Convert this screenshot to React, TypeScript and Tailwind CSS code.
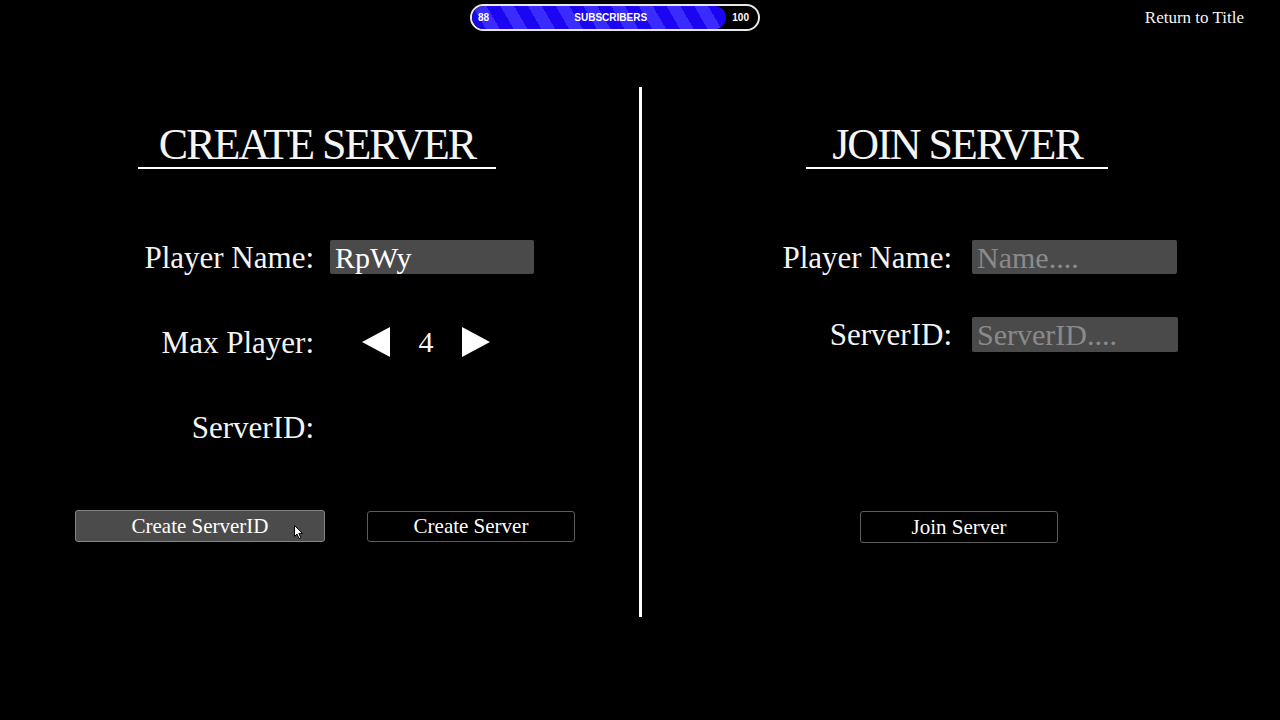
import React from 'react';

const serif = "font-['Liberation_Serif',serif]";

function Triangle({ dir }: { dir: 'left' | 'right' }) {
  return (
    <svg width="28" height="30" viewBox="0 0 28 30" className="block">
      {dir === 'left' ? (
        <polygon points="28,0 28,30 0,15" fill="#ffffff" />
      ) : (
        <polygon points="0,0 0,30 28,15" fill="#ffffff" />
      )}
    </svg>
  );
}

function SubscriberBar() {
  return (
    <div className="relative w-[290px] h-[27px] rounded-full border-2 border-[#e8e8e8] bg-black overflow-hidden font-['Liberation_Sans',sans-serif] font-bold text-white text-[10px]">
      <div className="absolute left-0 top-0 bottom-0 w-[254px] rounded-full bg-[repeating-linear-gradient(60deg,#1c06f2_0px,#1c06f2_12px,#3a2bff_12px,#3a2bff_24px)]" />
      <div className="relative flex items-center h-full px-[6px]">
        <span>88</span>
        <span className="flex-1 text-center">SUBSCRIBERS</span>
        <span className="pr-[3px]">100</span>
      </div>
    </div>
  );
}

function Cursor() {
  return (
    <svg width="10" height="15" viewBox="0 0 10 15" className="absolute left-[294px] top-[525px]">
      <path d="M0.5 0.5 L0.5 11.5 L3 9 L5 13.5 L6.8 12.7 L4.9 8.4 L8.5 8.4 Z" fill="#ffffff" stroke="#000000" strokeWidth="1" />
    </svg>
  );
}

export default function App() {
  return (
    <div className={`relative w-[1280px] h-[720px] bg-black text-[#f4f4f4] overflow-hidden ${serif}`}>
      {/* top bar */}
      <div className="flex items-start h-[87px]">
        <div className="ml-[470px] mt-[4px]">
          <SubscriberBar />
        </div>
        <div className="ml-auto mr-[36px] mt-[6px] text-[17px] leading-[24px]">Return to Title</div>
      </div>

      <div className="flex h-[530px]">
        {/* create server */}
        <div className="w-[639px] flex flex-col">
          <div className="ml-[138px] mt-[36px] w-[358px] border-b-2 border-white text-center">
            <h1 className="text-[44px] leading-[44px] tracking-[-2px]">CREATE SERVER</h1>
          </div>

          <div className="flex items-center h-[34px] mt-[71px]">
            <label className="ml-[100px] w-[214px] text-right text-[31px] leading-none">Player Name:</label>
            <input
              defaultValue="RpWy"
              className="ml-[16px] w-[204px] h-[34px] bg-[#4a4a4a] rounded-[2px] pl-[5px] text-[30px] text-white outline-none"
            />
          </div>

          <div className="flex items-center h-[34px] mt-[51px]">
            <label className="ml-[100px] w-[214px] text-right text-[31px] leading-none">Max Player:</label>
            <div className="ml-[48px]">
              <Triangle dir="left" />
            </div>
            <span className="w-[72px] text-center text-[30px] leading-none">4</span>
            <Triangle dir="right" />
          </div>

          <div className="flex items-center h-[34px] mt-[51px]">
            <label className="ml-[100px] w-[214px] text-right text-[31px] leading-none">ServerID:</label>
          </div>

          <div className="flex items-center mt-[66px]">
            <button className="ml-[75px] w-[250px] h-[32px] bg-[#4b4b4b] border border-[#858585] rounded-[3px] text-[21px] leading-none text-white">
              Create ServerID
            </button>
            <button className="ml-[42px] w-[208px] h-[31px] bg-black border border-[#5c5c5c] rounded-[3px] text-[21px] leading-none text-white">
              Create Server
            </button>
          </div>
        </div>

        {/* divider */}
        <div className="w-[3px] bg-white" />

        {/* join server */}
        <div className="flex-1 flex flex-col">
          <div className="ml-[164px] mt-[36px] w-[302px] border-b-2 border-white text-center">
            <h1 className="text-[44px] leading-[44px] tracking-[-2px]">JOIN SERVER</h1>
          </div>

          <div className="flex items-center h-[34px] mt-[71px]">
            <label className="ml-[110px] w-[200px] text-right text-[31px] leading-none">Player Name:</label>
            <input
              placeholder="Name...."
              className="ml-[20px] w-[205px] h-[34px] bg-[#4a4a4a] rounded-[2px] pl-[5px] text-[30px] text-white placeholder:text-[#8a8a8a] outline-none"
            />
          </div>

          <div className="flex items-center h-[35px] mt-[43px]">
            <label className="ml-[110px] w-[200px] text-right text-[31px] leading-none">ServerID:</label>
            <input
              placeholder="ServerID...."
              className="ml-[20px] w-[206px] h-[35px] bg-[#4a4a4a] rounded-[2px] pl-[5px] text-[30px] text-white placeholder:text-[#8a8a8a] outline-none"
            />
          </div>

          <div className="flex items-center mt-[159px]">
            <button className="ml-[218px] w-[198px] h-[32px] bg-black border border-[#5c5c5c] rounded-[3px] text-[21px] leading-none text-white">
              Join Server
            </button>
          </div>
        </div>
      </div>

      <Cursor />
    </div>
  );
}
